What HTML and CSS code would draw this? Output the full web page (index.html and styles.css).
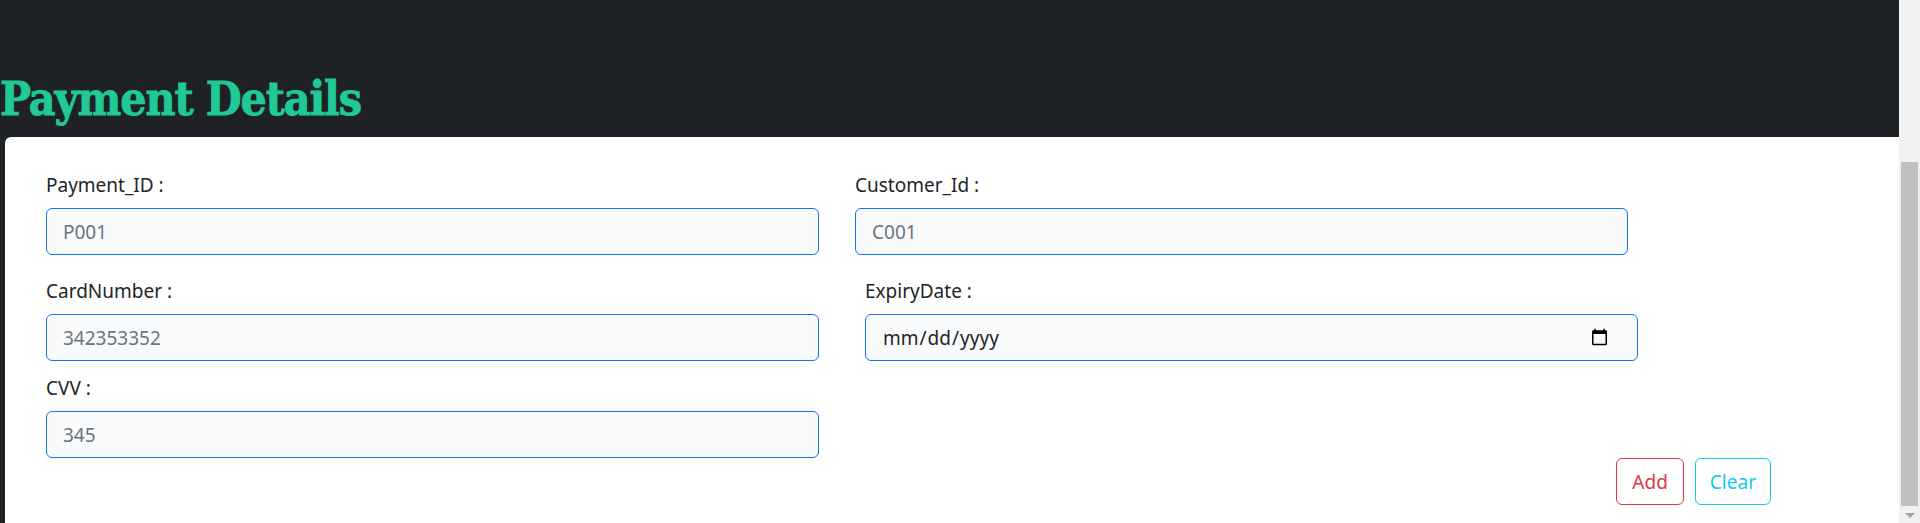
FILE: index.html
```html
<!DOCTYPE html>
<html lang="en">
<head>
<meta charset="utf-8">
<title>Payment Details</title>
<link rel="stylesheet" href="styles.css">
</head>
<body>
<div class="page">
  <h1 class="title">Payment Details</h1>
  <div class="card">
    <form class="form">
      <div class="row row-first">
        <div class="field">
          <label class="label" for="pid">Payment_ID :</label>
          <input class="input" id="pid" type="text" placeholder="P001">
        </div>
        <div class="field">
          <label class="label" for="cid">Customer_Id :</label>
          <input class="input" id="cid" type="text" placeholder="C001">
        </div>
      </div>
      <div class="row row-second">
        <div class="field">
          <label class="label" for="card">CardNumber :</label>
          <input class="input" id="card" type="text" placeholder="342353352">
        </div>
        <div class="field">
          <label class="label" for="exp">ExpiryDate :</label>
          <input class="input input-date" id="exp" type="date">
        </div>
      </div>
      <div class="row row-third">
        <div class="field">
          <label class="label" for="cvv">CVV :</label>
          <input class="input" id="cvv" type="text" placeholder="345">
        </div>
      </div>
      <div class="actions">
        <button class="btn btn-add" type="button">Add</button>
        <button class="btn btn-clear" type="reset">Clear</button>
      </div>
    </form>
  </div>
</div>
<div class="scrollbar">
  <div class="scroll-thumb"></div>
  <div class="scroll-arrow"></div>
</div>
</body>
</html>
```
FILE: styles.css
```css
html, body {
  margin: 0;
  padding: 0;
  height: 523px;
  overflow: hidden;
}
body {
  background: #1e2126;
  font-family: "Noto Sans", "Open Sans", sans-serif;
  color: #212529;
}
.page {
  width: 1899px;
}
.title {
  margin: 0;
  padding-top: 76px;
  height: 137px;
  box-sizing: border-box;
  font-family: "DejaVu Serif Condensed", "DejaVu Serif", serif;
  font-weight: 700;
  font-size: 46px;
  line-height: 1;
  color: #20c997;
  letter-spacing: -1.1px;
  white-space: nowrap;
  -webkit-text-stroke: 0.8px #20c997;
}
.card {
  margin-left: 5px;
  background: #ffffff;
  border-radius: 6px 0 0 0;
  height: 386px;
  padding: 33px 0 0 41px;
  box-sizing: border-box;
}
.row {
  display: flex;
}
.row-first { gap: 36px; }
.row-second { gap: 46px; margin-top: 21px; }
.row-third { margin-top: 12px; }
.field {
  width: 773px;
  display: flex;
  flex-direction: column;
}
.label {
  font-size: 19px;
  line-height: 30px;
  margin-bottom: 8px;
  color: #212529;
}
.input {
  box-sizing: border-box;
  height: 47px;
  width: 100%;
  margin: 0;
  border: 1px solid #1a6ff5;
  border-radius: 6px;
  background: #f9fafb;
  padding: 0 16px;
  font-family: "Noto Sans", "Open Sans", sans-serif;
  font-size: 19px;
  color: #212529;
  outline: none;
}
.input::placeholder {
  color: #6c757d;
}
.input-date {
  color: #212529;
}
.input-date::-webkit-calendar-picker-indicator {
  margin-right: 10px;
}
.actions {
  width: 1725px;
  display: flex;
  justify-content: flex-end;
  gap: 11px;
  margin-top: 0;
}
.btn {
  height: 47px;
  padding: 0 15px;
  background: transparent;
  border-radius: 6px;
  font-family: "Noto Sans", "Open Sans", sans-serif;
  font-size: 19px;
  cursor: pointer;
}
.btn-add {
  border: 1px solid #dc3545;
  color: #dc3545;
}
.btn-clear {
  border: 1px solid #0dcaf0;
  color: #0dcaf0;
  padding: 0 14px;
}
.scrollbar {
  position: fixed;
  top: 0;
  right: 0;
  width: 21px;
  height: 523px;
  background: #f1f1f1;
}
.scroll-thumb {
  position: absolute;
  left: 2px;
  top: 162px;
  width: 17px;
  height: 344px;
  background: #c1c1c1;
}
.scroll-arrow {
  position: absolute;
  left: 6px;
  top: 513px;
  width: 0;
  height: 0;
  border-left: 5px solid transparent;
  border-right: 5px solid transparent;
  border-top: 5px solid #a3a3a3;
}
```
